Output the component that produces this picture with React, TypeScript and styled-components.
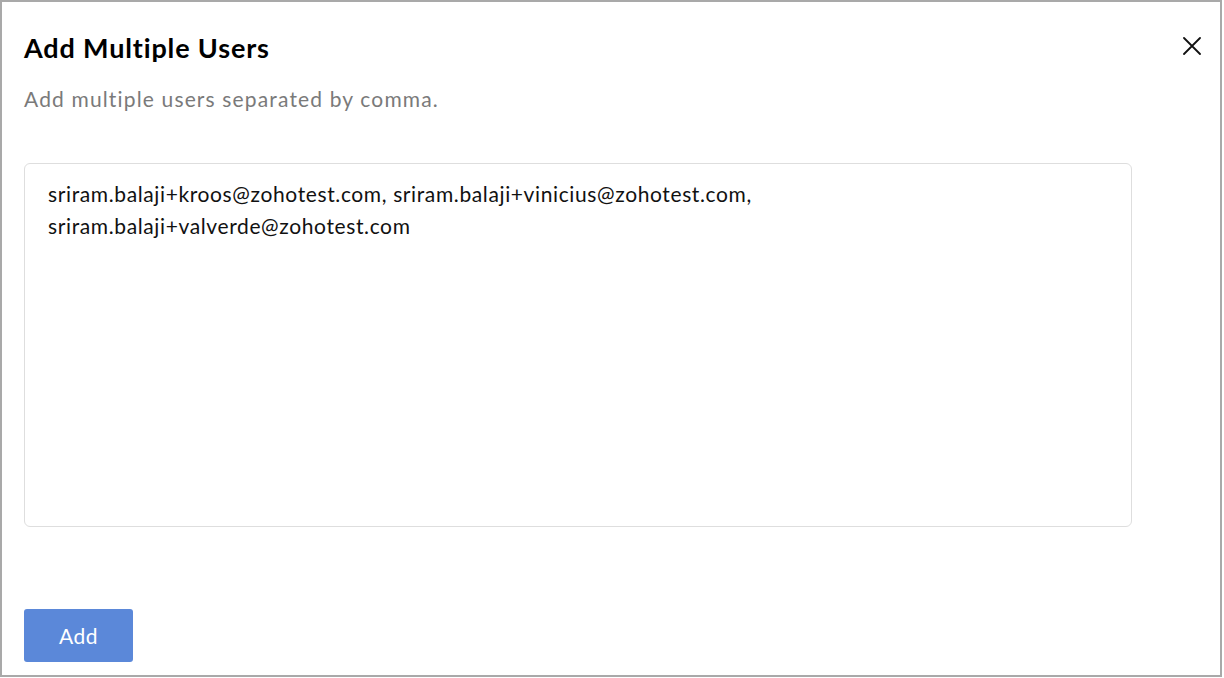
import React from "react";
import styled, { createGlobalStyle } from "styled-components";

const Global = createGlobalStyle`
  html, body { margin: 0; padding: 0; background: #ffffff; }
  body { font-family: Lato, "Open Sans", sans-serif; }
  * { box-sizing: border-box; }
`;

const Frame = styled.div`
  width: 1222px;
  height: 677px;
  border: 2px solid #a9a9a9;
  background: #fff;
  display: flex;
  flex-direction: column;
  padding: 0 22px;
`;

const Header = styled.div`
  display: flex;
  justify-content: space-between;
  align-items: flex-start;
  padding-top: 30px;
`;

const Title = styled.h1`
  margin: 0;
  font-size: 27px;
  letter-spacing: 0.85px;
  font-weight: 700;
  color: #000;
  line-height: 32px;
`;

const Close = styled.button`
  border: 0;
  background: none;
  padding: 0;
  margin-top: 4px;
  margin-right: -4px;
  width: 20px;
  height: 20px;
  display: flex;
  align-items: center;
  justify-content: center;
  cursor: pointer;
`;

const Subtitle = styled.p`
  margin: 21px 0 0;
  font-size: 21px;
  letter-spacing: 1.15px;
  color: #7a7a7a;
  line-height: 28px;
`;

const Area = styled.div`
  margin-top: 50px;
  width: 1108px;
  height: 364px;
  border: 1px solid #dedede;
  border-radius: 6px;
  padding: 14px 23px;
  font-size: 21px;
  letter-spacing: 0.62px;
  line-height: 32px;
  color: #111;
`;

const Footer = styled.div`
  margin-top: 82px;
  display: flex;
`;

const Button = styled.button`
  width: 109px;
  height: 53px;
  border: 0;
  border-radius: 3px;
  background: #5b88d9;
  color: #fff;
  font-family: Lato, sans-serif;
  font-size: 21px;
  letter-spacing: 0.5px;
  cursor: pointer;
`;

export default function App() {
  return (
    <>
      <Global />
      <Frame>
        <Header>
          <Title>Add Multiple Users</Title>
          <Close aria-label="close">
            <svg width="18" height="18" viewBox="0 0 18 18">
              <path d="M1 1 L17 17 M17 1 L1 17" stroke="#111" strokeWidth="1.8" strokeLinecap="round" />
            </svg>
          </Close>
        </Header>
        <Subtitle>Add multiple users separated by comma.</Subtitle>
        <Area>
          sriram.balaji+kroos@zohotest.com, sriram.balaji+vinicius@zohotest.com,
          <br />
          sriram.balaji+valverde@zohotest.com
        </Area>
        <Footer>
          <Button>Add</Button>
        </Footer>
      </Frame>
    </>
  );
}
